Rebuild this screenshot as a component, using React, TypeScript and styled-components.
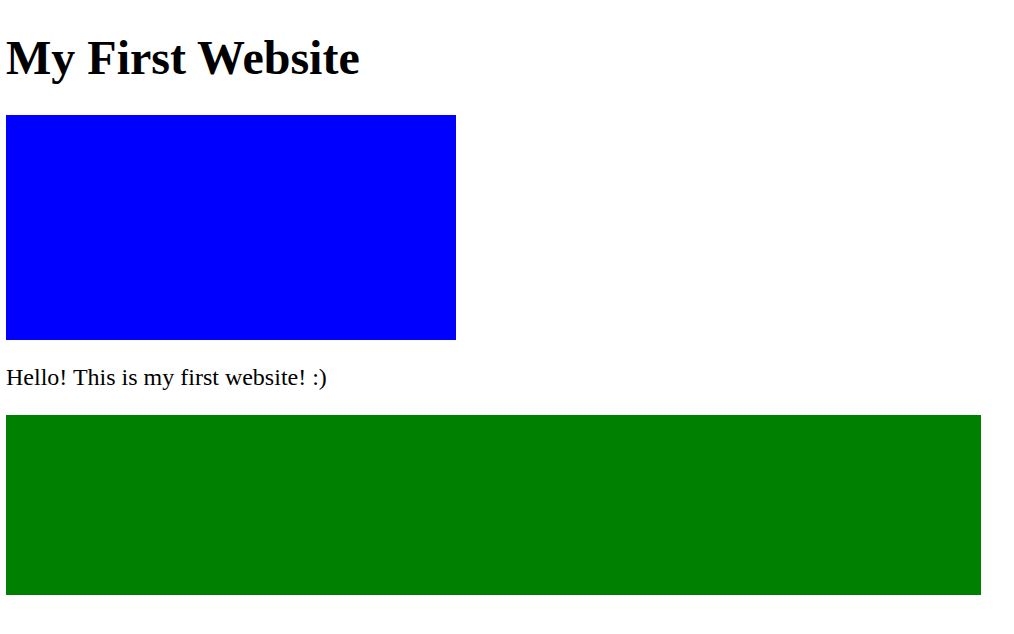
import React from "react";
import styled, { createGlobalStyle } from "styled-components";

const Global = createGlobalStyle`
  html, body { margin: 0; padding: 0; background: #ffffff; }
  body { font-family: "Liberation Serif", "Times New Roman", serif; color: #000; }
`;

const Page = styled.main`
  display: flex;
  flex-direction: column;
  align-items: flex-start;
  padding: 6px;
`;

const Title = styled.h1`
  margin: 26px 0 0;
  font-size: 48px;
  font-weight: bold;
  line-height: 51px;
`;

const Box = styled.div<{ $w: number; $h: number; $color: string; $mt: number }>`
  width: ${(p) => p.$w}px;
  height: ${(p) => p.$h}px;
  background: ${(p) => p.$color};
  margin-top: ${(p) => p.$mt}px;
`;

const Text = styled.p`
  margin: 26px 0 0;
  font-size: 24px;
  line-height: 23px;
`;

export default function App() {
  return (
    <>
      <Global />
      <Page>
        <Title>My First Website</Title>
        <Box $w={450} $h={225} $color="#0000ff" $mt={32} />
        <Text>Hello! This is my first website! :)</Text>
        <Box $w={975} $h={180} $color="#008000" $mt={26} />
      </Page>
    </>
  );
}
